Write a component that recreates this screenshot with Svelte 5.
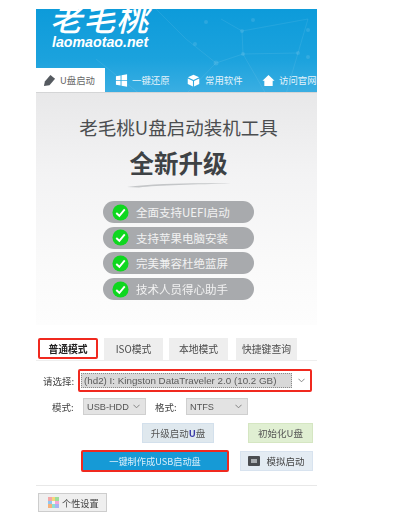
<script lang="ts">
  const navItems = [
    { id: 'usb', label: 'U盘启动', active: true },
    { id: 'win', label: '一键还原', active: false },
    { id: 'box', label: '常用软件', active: false },
    { id: 'home', label: '访问官网', active: false }
  ];
  const features = ['全面支持UEFI启动', '支持苹果电脑安装', '完美兼容杜绝蓝屏', '技术人员得心助手'];
  const modes = ['普通模式', 'ISO模式', '本地模式', '快捷键查询'];
  const swatches = ['#f3a6a6', '#f5d77c', '#9fdc9a', '#8fc7f0', '#f4f4f4', '#f3a6d6', '#f5b27c', '#8fe0d0', '#a6b4f3'];
</script>

<div class="window">
  <header class="banner">
    <svg class="mesh" viewBox="0 0 281 83" aria-hidden="true">
      <g stroke="#ffffff" stroke-opacity="0.1" fill="none" stroke-width="0.8">
        <path d="M185 10L206 22L207 45L180 54L150 85M207 45L262 44L272 10L206 22M207 45L230 85M120 0L150 30L180 54M60 50L110 90M262 44L250 85" />
      </g>
      <g fill="#ffffff" fill-opacity="0.11">
        <circle cx="170" cy="13" r="2" /><circle cx="206" cy="22" r="2" /><circle cx="207" cy="45" r="2" />
        <circle cx="180" cy="54" r="2.5" /><circle cx="262" cy="44" r="2" /><circle cx="272" cy="21" r="2" />
        <circle cx="159" cy="35" r="2" /><circle cx="272" cy="48" r="2" /><circle cx="217" cy="11" r="2" />
      </g>
    </svg>
    <div class="logo">
      <div class="logo-cn">老毛桃</div>
      <div class="logo-url">laomaotao.net</div>
    </div>
    <nav class="nav">
      {#each navItems as item}
        <div class="nav-item {item.id}" class:active={item.active}>
          {#if item.id === 'usb'}
            <svg class="nav-icon" viewBox="0 0 14 14"><path d="M1 13l1-5 6-7 5 4-6 7z" fill="#555a60" /></svg>
          {:else if item.id === 'win'}
            <svg class="nav-icon" viewBox="0 0 14 14"><path d="M1 2.4l5-.8v5H1zM7 1.4l6-1v6.200H7zM1 7.600h5v4.900l-5-.8zM7 7.600h6v6l-6-1z" fill="#fff" /></svg>
          {:else if item.id === 'box'}
            <svg class="nav-icon" viewBox="0 0 14 14"><path d="M7 .8l6 2.800L7 6.400 1 3.600zM.8 4.800L6.400 7.500v6L.8 10.700zM13.200 4.800v5.900l-5.600 2.800v-6z" fill="#fff" /></svg>
          {:else}
            <svg class="nav-icon" viewBox="0 0 14 14"><path d="M7 1l6.500 6.200h-2V13h-9V7.200h-2z" fill="#fff" /></svg>
          {/if}
          <span>{item.label}</span>
        </div>
      {/each}
    </nav>
  </header>

  <section class="hero">
    <h1>老毛桃U盘启动装机工具</h1>
    <h2>全新升级</h2>
    <svg class="swoosh" viewBox="0 0 104 6" aria-hidden="true"><path d="M0 5C30 1 70 1 104 1.500C70 2.500 30 3 12 5.500z" fill="#c4c6c8" /></svg>
    <ul class="features">
      {#each features as feature}
        <li>
          <svg class="check" viewBox="0 0 18 18"><circle cx="9" cy="9" r="8.500" fill="#0fd71f" /><path d="M4.500 9.500L7.800 12.500L13.500 5.800" stroke="#fff" stroke-width="2" fill="none" /></svg>
          <span>{feature}</span>
        </li>
      {/each}
    </ul>
  </section>

  <div class="tabs">
    {#each modes as mode, i}
      <div class="tab" class:current={i === 0}>{mode}</div>
    {/each}
  </div>

  <div class="form">
    <div class="row device-row">
      <span class="label">请选择:</span>
      <div class="device-box">
        <div class="select device"><span class="picked">(hd2) I: Kingston DataTraveler 2.0 (10.2 GB)</span><svg class="caret" viewBox="0 0 8 5"><path d="M.5 .5L4 4L7.500 .5" /></svg></div>
      </div>
    </div>
    <div class="row options-row">
      <span class="label short">模式:</span>
      <div class="select usb"><span>USB-HDD</span><svg class="caret" viewBox="0 0 8 5"><path d="M.5 .5L4 4L7.500 .5" /></svg></div>
      <span class="label short fmt">格式:</span>
      <div class="select ntfs"><span>NTFS</span><svg class="caret" viewBox="0 0 8 5"><path d="M.5 .5L4 4L7.500 .5" /></svg></div>
    </div>
    <div class="row actions-top">
      <button class="btn upgrade">升级启动<span class="u">U</span>盘</button>
      <button class="btn init">初始化U盘</button>
    </div>
    <div class="row actions-main">
      <button class="btn make">一键制作成USB启动盘</button>
      <button class="btn sim">
        <svg class="sim-icon" viewBox="0 0 12 10"><rect width="12" height="10" rx="1" fill="#4a4d50" /><rect x="3" y="3" width="6" height="4" fill="#a9adb0" /></svg>
        模拟启动
      </button>
    </div>
  </div>

  <footer class="foot">
    <button class="settings">
      <span class="palette">
        {#each swatches as c}<i style="background: {c}"></i>{/each}
      </span>
      个性设置
    </button>
  </footer>
</div>

<style>
  :global(body) {
    background: #fff;
  }

  .window {
    width: 281px;
    margin: 9px 0 0 36px;
    font-family: "Noto Sans CJK SC", "Liberation Sans", sans-serif;
    color: #444;
    filter: blur(0.6px);
  }

  .banner {
    position: relative;
    height: 83px;
    display: flex;
    flex-direction: column;
    justify-content: space-between;
    background: linear-gradient(180deg, #0d9bda 0%, #1ba2dd 60%, #3aaee2 100%);
    overflow: hidden;
  }

  .mesh {
    position: absolute;
    inset: 0;
    width: 100%;
    height: 100%;
  }

  .logo {
    position: relative;
    padding-left: 14px;
    color: #fff;
  }

  .logo-cn {
    height: 22px;
    margin-top: -3px;
    font-size: 32px;
    line-height: 22px;
    font-style: italic;
    font-weight: 500;
    letter-spacing: 1px;
  }

  .logo-url {
    font-family: "Liberation Sans", sans-serif;
    font-size: 14.2px;
    line-height: 16px;
    font-style: italic;
    font-weight: 700;
    margin-top: 6px;
    padding-left: 2px;
  }

  .nav {
    position: relative;
    height: 24px;
    display: flex;
    font-size: 9.4px;
    color: #e4f3fb;
  }

  .nav-item {
    display: flex;
    align-items: center;
    gap: 4px;
    padding-left: 10px;
    box-sizing: border-box;
    white-space: nowrap;
  }

  .nav-item.usb {
    width: 69px;
    padding-left: 7px;
  }

  .nav-item.win {
    width: 72px;
  }

  .nav-item.box {
    width: 75px;
    gap: 5px;
  }

  .nav-item.home {
    flex: 1;
  }

  .nav-item.active {
    background: #fff;
    color: #666;
  }

  .nav-icon {
    width: 13px;
    height: 13px;
    flex-shrink: 0;
  }

  .hero {
    height: 233px;
    box-sizing: border-box;
    padding-left: 4px;
    border-top: 1px solid #d4d5d6;
    display: flex;
    flex-direction: column;
    align-items: center;
    background: linear-gradient(180deg, #e8e8e9 0%, #f3f3f4 35%, #fafafa 75%, #fdfdfd 100%);
  }

  h1 {
    margin: 20px 0 0;
    font-size: 18.5px;
    line-height: 28px;
    font-weight: 400;
    color: #4b4d4f;
    white-space: nowrap;
  }

  h2 {
    margin: 5px 0 0;
    font-size: 24.5px;
    line-height: 34px;
    font-weight: 700;
    color: #3e4245;
  }

  .swoosh {
    width: 104px;
    height: 6px;
    margin-top: 2px;
  }

  .features {
    list-style: none;
    margin: 13px 0 0;
    padding: 0;
    display: flex;
    flex-direction: column;
    gap: 3.7px;
  }

  .features li {
    width: 151px;
    height: 22px;
    box-sizing: border-box;
    padding-left: 9px;
    display: flex;
    align-items: center;
    gap: 7px;
    border-radius: 11px;
    background: #a8aaad;
    color: #f2f2f2;
    font-size: 11.5px;
    white-space: nowrap;
  }

  .check {
    width: 17px;
    height: 17px;
    flex-shrink: 0;
  }

  .tabs {
    margin-top: 13px;
    height: 22px;
    padding-left: 2px;
    display: flex;
    gap: 6px;
    font-size: 9.8px;
    border-bottom: 1px solid #eee;
  }

  .tab {
    width: 59px;
    box-sizing: border-box;
    display: flex;
    align-items: center;
    justify-content: center;
    background: #eeeeee;
    color: #4a4a4a;
    white-space: nowrap;
  }

  .tab:last-child {
    width: 61px;
    margin-left: 2px;
  }

  .tab.current {
    width: 60px;
    margin-bottom: 1px;
    background: #fff;
    border: 2px solid #f0291f;
    border-radius: 2px;
    color: #222;
    font-weight: 700;
  }

  .form {
    display: flex;
    flex-direction: column;
    font-size: 9.5px;
    color: #444;
  }

  .row {
    display: flex;
    align-items: center;
  }

  .device-row {
    margin-top: 8px;
    padding-left: 7px;
  }

  .label {
    width: 35px;
    white-space: nowrap;
  }

  .label.short {
    width: 31px;
    margin-left: 16px;
  }

  .label.fmt {
    margin-left: 9px;
  }

  .device-box {
    width: 234px;
    height: 23px;
    box-sizing: border-box;
    padding: 1px;
    border: 2px solid #f0291f;
    border-radius: 2px;
    display: flex;
  }

  .select {
    display: flex;
    align-items: center;
    justify-content: space-between;
    box-sizing: border-box;
    padding: 0 5px 0 3px;
    height: 17px;
    background: #e3e3e3;
    border: 1px solid #cfcfcf;
    font-family: "Liberation Sans", sans-serif;
    font-size: 9.2px;
    color: #555;
    white-space: nowrap;
  }

  .device {
    width: 100%;
    height: 100%;
    background: #fff;
    border: 0;
    padding: 0 4px 0 0;
  }

  .picked {
    flex: 1;
    background: #d8d8d8;
    outline: 1px dotted #8a8a8a;
    outline-offset: -1px;
    padding: 2px 3px;
    margin-right: 6px;
    font-size: 9.8px;
    color: #5a5a5a;
  }

  .caret {
    width: 7px;
    height: 5px;
    flex-shrink: 0;
    fill: none;
    stroke: #777;
  }

  .options-row {
    margin-top: 6px;
  }

  .usb {
    width: 63px;
  }

  .ntfs {
    width: 62px;
  }

  .btn {
    box-sizing: border-box;
    padding: 0;
    font: inherit;
    display: flex;
    align-items: center;
    justify-content: center;
    color: #555;
    white-space: nowrap;
  }

  .actions-top {
    margin-top: 8px;
    padding-left: 106px;
  }

  .upgrade {
    width: 72px;
    height: 20px;
    background: #dfe8ee;
    border: 1px solid #d3e0ec;
  }

  .u {
    color: #3a3aa8;
    font-weight: 700;
  }

  .init {
    width: 65px;
    height: 20px;
    margin-left: 34px;
    background: #e0efd2;
    border: 1px solid #d5e6c2;
  }

  .actions-main {
    margin-top: 7px;
    padding-left: 45px;
  }

  .make {
    width: 148px;
    height: 22px;
    background: #169ad6;
    border: 2px solid #f0291f;
    border-radius: 2px;
    color: #d8eefa;
    font-size: 9.2px;
  }

  .sim {
    width: 73px;
    height: 20px;
    margin-left: 11px;
    gap: 6px;
    background: #e4ecf3;
    border: 1px solid #d8e3ef;
    color: #444;
  }

  .sim-icon {
    width: 12px;
    height: 10px;
  }

  .foot {
    margin-top: 13px;
    padding: 7px 0 0 2px;
    border-top: 1px solid #e8e8e8;
  }

  .settings {
    width: 69px;
    height: 19px;
    padding: 0 0 0 9px;
    box-sizing: border-box;
    display: flex;
    align-items: center;
    gap: 3px;
    font: inherit;
    font-size: 9.2px;
    color: #444;
    background: #efefef;
    border: 1px solid #cdcdcd;
    white-space: nowrap;
  }

  .palette {
    width: 11px;
    height: 11px;
    display: grid;
    grid-template-columns: repeat(3, 1fr);
    flex-shrink: 0;
  }
</style>
